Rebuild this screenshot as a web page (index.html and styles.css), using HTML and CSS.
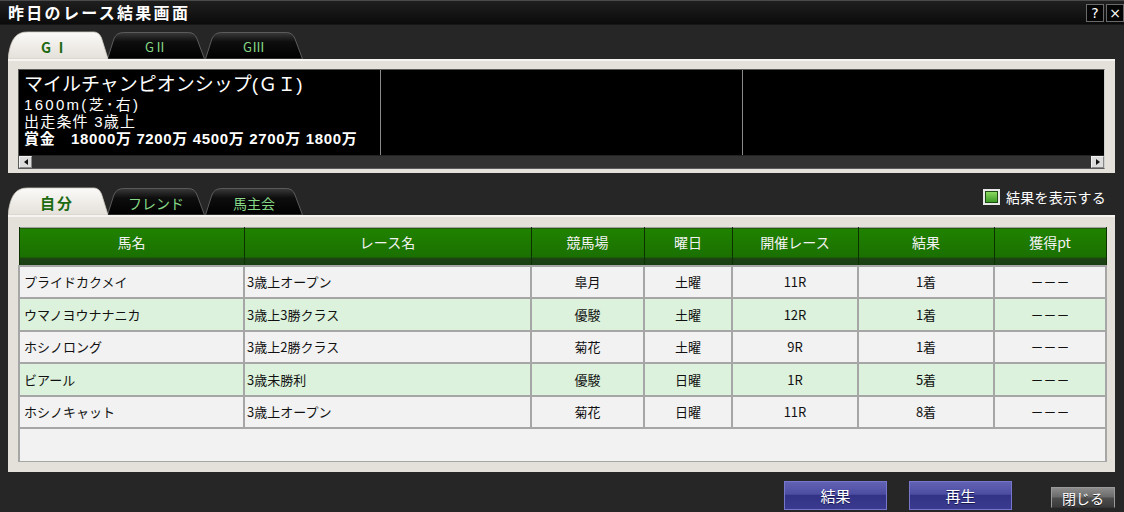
FILE: index.html
```html
<!DOCTYPE html>
<html lang="ja">
<head>
<meta charset="utf-8">
<title>昨日のレース結果画面</title>
<link rel="stylesheet" href="styles.css">
</head>
<body>
<div class="win">
  <header class="titlebar">
    <h1>昨日のレース結果画面</h1>
    <div class="tb-btns"><span class="tb-btn">?</span><span class="tb-btn">×</span></div>
  </header>
  <div class="content">
    <nav class="tabs">
      <div class="tab active">
        <svg class="tab-bg" viewBox="0 0 100 28" preserveAspectRatio="none"><defs><linearGradient id="ga" x1="0" y1="0" x2="0" y2="1"><stop offset="0" stop-color="#fbfaf8"/><stop offset="1" stop-color="#e4e0da"/></linearGradient></defs><path d="M0 28 C1.5 16 4 5 13 2 Q15 1 20 1 L86 1 Q91 1 93.5 7 L100 28 Z" fill="url(#ga)" stroke="#cfcac2" stroke-width="0.8"/></svg>
        <span class="tab-label">GⅠ</span>
      </div>
      <div class="tab">
        <svg class="tab-bg" viewBox="0 0 100 28" preserveAspectRatio="none"><defs><linearGradient id="gd" x1="0" y1="0" x2="0" y2="1"><stop offset="0" stop-color="#3a3a3a"/><stop offset="0.35" stop-color="#0e0e0e"/><stop offset="1" stop-color="#000"/></linearGradient></defs><path d="M0.5 28 L7 8 Q9.5 1.5 17 1.5 L83 1.5 Q89 1.5 91.5 7 L99.5 28 Z" fill="url(#gd)" stroke="#5c5c5c" stroke-width="1"/></svg>
        <span class="tab-label">GⅡ</span>
      </div>
      <div class="tab">
        <svg class="tab-bg" viewBox="0 0 100 28" preserveAspectRatio="none"><path d="M0.5 28 L7 8 Q9.5 1.5 17 1.5 L83 1.5 Q89 1.5 91.5 7 L99.5 28 Z" fill="url(#gd)" stroke="#5c5c5c" stroke-width="1"/></svg>
        <span class="tab-label">GⅢ</span>
      </div>
    </nav>

    <section class="panel info-panel">
      <div class="info-frame">
        <div class="info-cols">
          <div class="info-col">
            <div class="race-name">マイルチャンピオンシップ(ＧＩ)</div>
            <div class="race-line dist">1600m(芝･右)</div>
            <div class="race-line">出走条件 3歳上</div>
            <div class="race-line prize">賞金　18000万 7200万 4500万 2700万 1800万</div>
          </div>
          <div class="info-col"></div>
          <div class="info-col"></div>
        </div>
        <div class="hscroll">
          <span class="sb-btn"><span class="tri-left"></span></span>
          <span class="sb-track"></span>
          <span class="sb-btn"><span class="tri-right"></span></span>
        </div>
      </div>
    </section>

    <div class="tabrow">
      <nav class="tabs">
        <div class="tab active">
          <svg class="tab-bg" viewBox="0 0 100 28" preserveAspectRatio="none"><path d="M0 28 C1.5 16 4 5 13 2 Q15 1 20 1 L86 1 Q91 1 93.5 7 L100 28 Z" fill="url(#ga)" stroke="#cfcac2" stroke-width="0.8"/></svg>
          <span class="tab-label">自分</span>
        </div>
        <div class="tab">
          <svg class="tab-bg" viewBox="0 0 100 28" preserveAspectRatio="none"><path d="M0.5 28 L7 8 Q9.5 1.5 17 1.5 L83 1.5 Q89 1.5 91.5 7 L99.5 28 Z" fill="url(#gd)" stroke="#5c5c5c" stroke-width="1"/></svg>
          <span class="tab-label">フレンド</span>
        </div>
        <div class="tab">
          <svg class="tab-bg" viewBox="0 0 100 28" preserveAspectRatio="none"><path d="M0.5 28 L7 8 Q9.5 1.5 17 1.5 L83 1.5 Q89 1.5 91.5 7 L99.5 28 Z" fill="url(#gd)" stroke="#5c5c5c" stroke-width="1"/></svg>
          <span class="tab-label">馬主会</span>
        </div>
      </nav>
      <label class="check"><span class="check-box"><span class="check-fill"></span></span>結果を表示する</label>
    </div>

    <section class="panel results-panel">
      <table class="results">
        <colgroup>
          <col class="c-name"><col class="c-race"><col class="c-track"><col class="c-day"><col class="c-num"><col class="c-res"><col class="c-pt">
        </colgroup>
        <thead>
          <tr><th>馬名</th><th>レース名</th><th>競馬場</th><th>曜日</th><th>開催レース</th><th>結果</th><th>獲得pt</th></tr>
        </thead>
        <tbody>
          <tr><td class="l">プライドカクメイ</td><td class="l r">3歳上オープン</td><td>皐月</td><td>土曜</td><td>11R</td><td>1着</td><td>－－－</td></tr>
          <tr class="alt"><td class="l">ウマノヨウナナニカ</td><td class="l r">3歳上3勝クラス</td><td>優駿</td><td>土曜</td><td>12R</td><td>1着</td><td>－－－</td></tr>
          <tr><td class="l">ホシノロング</td><td class="l r">3歳上2勝クラス</td><td>菊花</td><td>土曜</td><td>9R</td><td>1着</td><td>－－－</td></tr>
          <tr class="alt"><td class="l">ビアール</td><td class="l r">3歳未勝利</td><td>優駿</td><td>日曜</td><td>1R</td><td>5着</td><td>－－－</td></tr>
          <tr><td class="l">ホシノキャット</td><td class="l r">3歳上オープン</td><td>菊花</td><td>日曜</td><td>11R</td><td>8着</td><td>－－－</td></tr>
          <tr class="empty"><td colspan="7"></td></tr>
        </tbody>
      </table>
    </section>

    <footer class="actions">
      <button class="btn btn-blue">結果</button>
      <button class="btn btn-blue">再生</button>
      <button class="btn btn-gray">閉じる</button>
    </footer>
  </div>
</div>
</body>
</html>
```
FILE: styles.css
```css
* { box-sizing: border-box; }
html, body { margin: 0; padding: 0; }
body {
  width: 1124px;
  height: 512px;
  overflow: hidden;
  background: #262626;
  font-family: "Noto Sans CJK JP", "Liberation Sans", sans-serif;
}
.win { width: 1124px; height: 512px; background: #262626; }

.titlebar {
  height: 25px;
  display: flex;
  justify-content: space-between;
  align-items: flex-start;
  background: linear-gradient(#1f1f1f, #0b0b0b);
  border-top: 1px solid #4a4a4a;
  border-bottom: 1px solid #161616;
  padding-left: 8px;
}
.titlebar h1 {
  margin: 0;
  font-size: 16px;
  line-height: 23px;
  font-weight: bold;
  color: #fff;
  letter-spacing: 2.3px;
}
.tb-btns { display: flex; gap: 2px; margin-top: 3px; }
.tb-btn {
  width: 18px; height: 18px;
  border: 1px solid #6a6a6a;
  background: #050505;
  color: #fff;
  font-size: 14px;
  line-height: 16px;
  text-align: center;
  font-family: "DejaVu Sans", sans-serif;
}

.content { padding: 6px 10px 0 8px; }

.tabs { display: flex; height: 28px; }
.tab {
  position: relative;
  width: 98px;
  height: 28px;
  display: flex;
  align-items: center;
  justify-content: center;
}
.tab.active { width: 100px; z-index: 2; }
.tab.active + .tab { margin-left: -1px; }
.tab-bg { position: absolute; left: 0; top: 0; width: 100%; height: 100%; }
.tab-label {
  position: relative;
  font-size: 13px;
  color: #86d886;
  padding-top: 3px;
}
.tab.active .tab-label {
  color: #1c6a12;
  font-weight: bold;
  font-size: 14px;
  letter-spacing: 3px;
  margin-left: -4px;
}

.panel {
  background: #e4e0da;
  border-top: 2px solid #f6f4f0;
  margin-right: -1px;
}
.info-panel { height: 114px; padding: 8px 10px 5px 10px; }
.info-frame { border: 1px solid #5a5a5a; border-right-color: #cfcfcf; }
.info-cols { display: flex; height: 85px; background: #000; }
.info-col { flex: 0 0 362px; border-right: 1px solid #8a8a8a; padding: 4px 0 0 5px; color: #fff; }
.info-col:last-child { flex: 1; border-right: none; }
.race-name {
  font-family: "Liberation Sans", "Noto Sans CJK JP", sans-serif;
  font-size: 19px;
  line-height: 22px;
  height: 22px;
  white-space: nowrap;
}
.race-line {
  font-family: "Liberation Sans", "Noto Sans CJK JP", sans-serif;
  font-size: 15px;
  line-height: 17px;
  height: 17px;
  letter-spacing: 1.2px;
  white-space: nowrap;
}
.race-line.dist { letter-spacing: 2.3px; }
.race-line.prize { font-weight: bold; letter-spacing: 0.65px; }

.hscroll { display: flex; height: 13px; background: #333; border-top: 1px solid #222; }
.sb-track { flex: 1; }
.sb-btn {
  width: 13px; height: 12px;
  background: #dcdcdc;
  border: 1px solid #f2f2f2;
  border-right-color: #888;
  border-bottom-color: #888;
  display: flex; align-items: center; justify-content: center;
}
.tri-left { width: 0; height: 0; border-top: 3px solid transparent; border-bottom: 3px solid transparent; border-right: 4px solid #111; }
.tri-right { width: 0; height: 0; border-top: 3px solid transparent; border-bottom: 3px solid transparent; border-left: 4px solid #111; }

.tabrow { display: flex; justify-content: space-between; align-items: flex-start; margin-top: 14px; }
.tabrow .tab-label { font-size: 14px; }
.tabrow .tab.active .tab-label { letter-spacing: 2px; margin-left: -2px; font-size: 15px; }

.check {
  display: flex; align-items: center; gap: 6px;
  color: #fff; font-size: 14px; letter-spacing: 0.3px;
  margin-right: 8px;
}
.check-box {
  width: 17px; height: 16px;
  border: 2px solid #e8e8e8;
  background: #1d4a12;
  padding: 1px;
  display: flex;
}
.check-fill { flex: 1; background: linear-gradient(#8ad860, #3e9c26); }

.results-panel { height: 257px; padding: 10px 9px 12px 10px; }
.results {
  width: 1087px;
  border-collapse: collapse;
  table-layout: fixed;
  font-size: 13px;
  color: #111;
  border: 1px solid #a0a0a0;
}
.c-name { width: 225px; } .c-race { width: 287px; } .c-track { width: 113px; }
.c-day { width: 88px; } .c-num { width: 126px; } .c-res { width: 136px; } .c-pt { width: 112px; }

.results th {
  height: 38px;
  padding: 0 0 8px 0;
  font-weight: normal;
  font-size: 14px;
  color: #f2f2f2;
  background: linear-gradient(#208200 0%, #1a7000 78%, #1c4214 80%, #1a3e12 100%);
  border-right: 1px solid #0d3000;
  border-left: 1px solid #0d3000;
}
.results td {
  height: 32.5px;
  padding: 0;
  text-align: center;
  background: #f2f2f2;
  border: 2px solid #a6a6a6;
}
.results td.l { text-align: left; padding-left: 4px; }
.results td.r { padding-left: 2px; }
.results tr.alt td { background: #dcf2dc; }
.results tr.empty td { height: 33px; border-bottom: 1px solid #a6a6a6; }

.actions { display: flex; justify-content: flex-end; align-items: flex-end; margin-top: 9px; }
.btn {
  font-family: "Noto Sans CJK JP", sans-serif;
  color: #fff;
  padding: 0;
  cursor: pointer;
}
.btn-blue {
  width: 103px; height: 29px;
  margin-right: 22px;
  font-size: 15px;
  border: 1px solid #7676cc;
  background: linear-gradient(#6262b4 0%, #4c4ca2 45%, #323286 50%, #3a3a8e 100%);
  text-shadow: 0 1px 0 #1a1a50;
}
.btn-blue + .btn-blue { margin-right: 39px; }
.btn-gray {
  width: 64px; height: 21px;
  margin-bottom: 2px;
  margin-right: -1px;
  font-size: 14px;
  border: 1px solid #9a9a9a;
  border-bottom-color: #333;
  background: linear-gradient(#8c8c8c 0%, #6c6c6c 45%, #4c4c4c 55%, #3a3a3a 100%);
  text-shadow: 0 1px 0 #222;
}
```
